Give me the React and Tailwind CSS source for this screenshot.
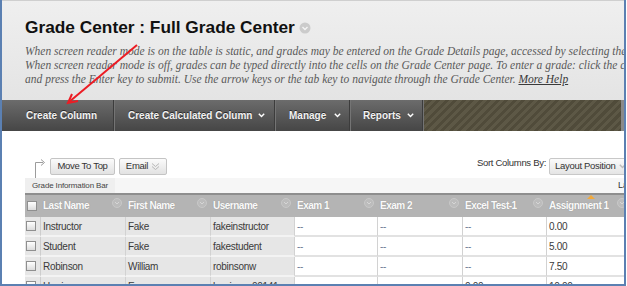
import React from "react";

const Chev = ({ c = "#ffffff", w = 7 }) => (
  <svg width={w} height="5" viewBox="0 0 7 5" className="shrink-0">
    <path d="M0.8 0.8 L3.5 3.6 L6.2 0.8" fill="none" stroke={c} strokeWidth="1.4" />
  </svg>
);

const Sep = () => (
  <div className="flex h-full shrink-0">
    <div className="w-px h-full bg-[#3c3c3c]" />
    <div className="w-px h-full bg-[#747474]" />
  </div>
);

const Check = () => (
  <span className="block w-[10px] h-[10px] border border-[#8f8f8f] bg-gradient-to-b from-[#ffffff] to-[#dcdcdc]" />
);

const HeadCircle = () => (
  <svg width="10" height="10" viewBox="0 0 10 10" className="shrink-0">
    <circle cx="5" cy="5" r="4.5" fill="#bcbcbc" stroke="#c8c8c8" />
    <path d="M3 4 L5 6 L7 4" fill="none" stroke="#d6d6d6" strokeWidth="1" />
  </svg>
);

const cols = [
  { w: "w-[85px]", label: "Last Name", gray: true },
  { w: "w-[85px]", label: "First Name", gray: true },
  { w: "w-[84px]", label: "Username", gray: true },
  { w: "w-[83px]", label: "Exam 1" },
  { w: "w-[85px]", label: "Exam 2" },
  { w: "w-[84px]", label: "Excel Test-1" },
  { w: "w-[84px]", label: "Assignment 1", sorted: true },
];

const rows = [
  ["Instructor", "Fake", "fakeinstructor", "--", "--", "--", "0.00"],
  ["Student", "Fake", "fakestudent", "--", "--", "--", "5.00"],
  ["Robinson", "William", "robinsonw", "--", "--", "--", "7.50"],
  ["Harrison", "Emma", "harrisone00141", "", "", "0.00", "10.00"],
];

export default function App() {
  return (
    <div className="relative w-[627px] h-[286px] overflow-hidden bg-white font-['Liberation_Sans',Arial,sans-serif]">
      <div className="w-[626px] h-[286px] border-l-2 border-r-2 border-b-2 border-[#5b80b2] flex flex-col overflow-hidden">
        {/* Header */}
        <div className="h-[100px] shrink-0 border-t border-[#cfcfcf] bg-gradient-to-b from-[#efefef] to-[#e4e4e4] pl-[23px] overflow-hidden">
          <div className="mt-[16px] flex items-center h-[20px]">
            <span className="text-[17.3px] leading-[20px] font-bold text-[#111] whitespace-nowrap">
              Grade Center : Full Grade Center
            </span>
            <svg width="12" height="12" viewBox="0 0 12 12" className="ml-[4px] mt-[1px]">
              <circle cx="6" cy="6" r="5.5" fill="#cbcbcb" />
              <path d="M3.5 5 L6 7.5 L8.5 5" fill="none" stroke="#f4f4f4" strokeWidth="1.4" />
            </svg>
          </div>
          <div className="mt-[7px] font-['Liberation_Serif','Times_New_Roman',serif] italic text-[11.5px] leading-[14px] text-[#5a5a5a] whitespace-nowrap">
            <div>When screen reader mode is on the table is static, and grades may be entered on the Grade Details page, accessed by selecting the</div>
            <div>When screen reader mode is off, grades can be typed directly into the cells on the Grade Center page. To enter a grade: click the cell</div>
            <div>
              and press the Enter key to submit. Use the arrow keys or the tab key to navigate through the Grade Center.{" "}
              <span className="underline text-[#3a3a3a]">More Help</span>
            </div>
          </div>
        </div>

        {/* Toolbar */}
        <div className="h-[31px] shrink-0 flex bg-gradient-to-b from-[#6c6c6c] to-[#464646] text-[10px] font-bold text-[#f2f2f2] [text-shadow:0_-1px_0_#2a2a2a]">
          <div className="w-[111px] shrink-0 flex items-center pl-[24px] whitespace-nowrap">Create Column</div>
          <Sep />
          <div className="w-[159px] shrink-0 flex items-center pl-[13px] gap-[6px] whitespace-nowrap">
            Create Calculated Column <Chev />
          </div>
          <Sep />
          <div className="w-[73px] shrink-0 flex items-center pl-[13px] gap-[8px] whitespace-nowrap">
            Manage <Chev />
          </div>
          <Sep />
          <div className="w-[71px] shrink-0 flex items-center pl-[12px] gap-[6px] whitespace-nowrap">
            Reports <Chev />
          </div>
          <Sep />
          <div className="flex-1 bg-[#56513f] bg-[repeating-linear-gradient(135deg,#5d5846_0px,#5d5846_3px,#504b3a_3px,#504b3a_6px)]" />
          <div className="w-[3px] shrink-0 bg-[#8a8a8a]" />
        </div>

        {/* Action bar */}
        <div className="h-[47px] shrink-0 flex items-end pb-[3px] pl-[28px] text-[9.5px] tracking-[-0.3px] text-[#333]">
          <svg width="20" height="22" viewBox="0 0 20 22" className="shrink-0 self-end -mb-[3px]">
            <path d="M5.5 22 V6.5 H13" fill="none" stroke="#9c9c9c" strokeWidth="1" />
            <path d="M11 3.5 L14.5 6.5 L11 9.5" fill="none" stroke="#9c9c9c" strokeWidth="1" />
          </svg>
          <div className="h-[17px] w-[65px] shrink-0 flex items-center justify-center border border-[#c4c4c4] rounded-[2px] bg-gradient-to-b from-[#fbfbfb] to-[#e2e2e2]">
            Move To Top
          </div>
          <div className="ml-[4px] h-[17px] w-[48px] shrink-0 flex items-center justify-center gap-[3px] border border-[#c4c4c4] rounded-[2px] bg-gradient-to-b from-[#fbfbfb] to-[#e2e2e2]">
            Email
            <svg width="9" height="9" viewBox="0 0 9 9">
              <path d="M1 1.5 L4.5 4.5 L8 1.5 M1 4.5 L4.5 7.5 L8 4.5" fill="none" stroke="#b8b8b8" strokeWidth="1" />
            </svg>
          </div>
          <div className="flex-1" />
          <div className="h-[17px] flex items-center mb-[3px] mr-[3px] whitespace-nowrap">Sort Columns By:</div>
          <div className="h-[17px] w-[85px] shrink-0 -mr-[10px] flex items-center pl-[5px] gap-[4px] border border-[#c8c8c8] rounded-[2px] bg-gradient-to-b from-[#fbfbfb] to-[#e4e4e4] whitespace-nowrap">
            Layout Position
            <Chev c="#bcbcbc" />
          </div>
        </div>

        {/* Table area */}
        <div className="pl-[23px] flex flex-col overflow-hidden">
          {/* Grade info bar */}
          <div className="h-[15px] shrink-0 flex items-center bg-[#f6f6f6]">
            <div className="h-full w-[90px] shrink-0 flex items-center pl-[7px] bg-[#efefef] text-[8px] tracking-[-0.15px] text-[#444] whitespace-nowrap">
              Grade Information Bar
            </div>
            <div className="flex-1" />
            <div className="w-[60px] shrink-0 -mr-[54px] text-[9px] text-[#333] whitespace-nowrap">Last Saved</div>
          </div>

          {/* Header row */}
          <div className="h-[24px] shrink-0 flex border-t-2 border-[#8e8e8e] bg-[#b4b4b4] text-[10px] font-bold tracking-[-0.5px] text-[#fafafa] [text-shadow:0_0_1px_#8a8a8a]">
            <div className="w-[16px] shrink-0 flex items-center justify-end pr-[4px]">
              <Check />
            </div>
            {cols.map((c) => (
              <div key={c.label} className={`${c.w} shrink-0 relative flex items-start justify-between pl-[2px] pr-[4px]`}>
                <span className="mt-[4px] leading-[14px] whitespace-nowrap">{c.label}</span>
                <div className="mt-[3px]"><HeadCircle /></div>
                {c.sorted && (
                  <svg width="8" height="4" viewBox="0 0 8 4" className="absolute left-[40px] top-0">
                    <path d="M0 4 L4 0 L8 4 Z" fill="#f2a93b" />
                  </svg>
                )}
              </div>
            ))}
          </div>

          {/* Body rows */}
          {rows.map((r, i) => (
            <div key={i} className="h-[20px] shrink-0 flex text-[10px] tracking-[-0.3px] text-[#3a3a3a]">
              <div className="w-[16px] shrink-0 flex items-center justify-end pr-[4px] bg-[#e6e6e6] border-b-2 border-[#f3f3f3] border-r border-r-[#cdcdcd]">
                <Check />
              </div>
              {r.map((v, j) => {
                const gray = j < 3;
                const dash = v === "--";
                return (
                  <div
                    key={j}
                    className={`${cols[j].w} shrink-0 flex items-center pl-[2px] border-r border-r-[#d2d2d2] border-b-2 whitespace-nowrap overflow-hidden ${
                      gray ? "bg-[#e6e6e6] border-b-[#f3f3f3]" : "bg-white border-b-[#e2e2e2]"
                    } ${dash ? "text-[#6d7d95]" : ""}`}
                  >
                    {v}
                  </div>
                );
              })}
            </div>
          ))}
        </div>
      </div>

      {/* Red annotation arrow */}
      <svg width="627" height="286" className="absolute inset-0 pointer-events-none">
        <line x1="137" y1="45" x2="69" y2="102" stroke="#ec1c24" strokeWidth="2" />
        <path d="M78 101 L68 103 L72 94" fill="none" stroke="#ec1c24" strokeWidth="2" />
      </svg>
    </div>
  );
}
